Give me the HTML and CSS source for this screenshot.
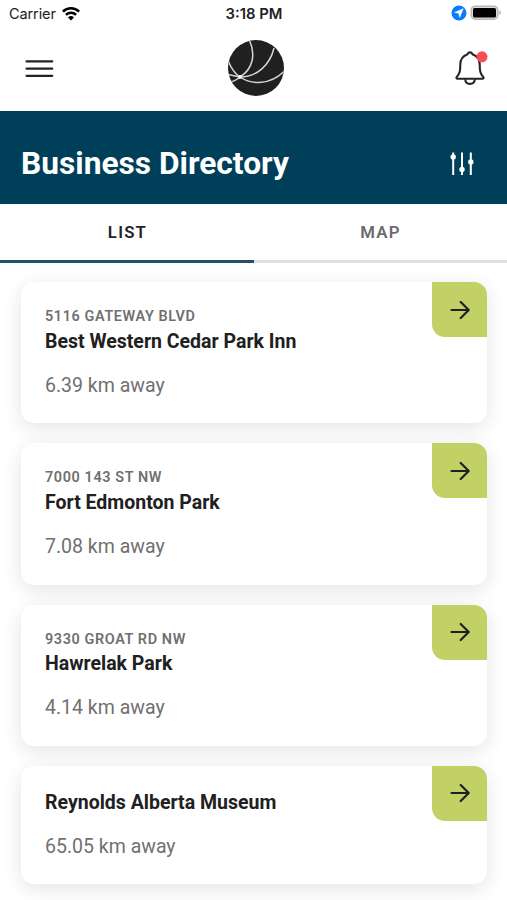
FILE: index.html
```html
<!DOCTYPE html>
<html lang="en">
<head>
<meta charset="utf-8">
<title>Business Directory</title>
<link rel="stylesheet" href="styles.css">
</head>
<body>
<div class="status">
  <div class="status-left">
    <span class="carrier">Carrier</span>
    <svg class="wifi" width="18" height="14" viewBox="0 0 18 14"><g fill="none" stroke="#000" stroke-width="2.5"><path d="M0.9 4.600a11.6 11.6 0 0 1 16.2 0"/><path d="M3.9 7.900a7.3 7.3 0 0 1 10.2 0"/></g><path d="M6 10.5a4.3 4.3 0 0 1 6 0L9 13.500z"/></svg>
  </div>
  <span class="time">3:18 PM</span>
  <div class="status-right">
    <svg width="16" height="16" viewBox="0 0 16 16"><circle cx="8" cy="8" r="7.5" fill="#087cff"/><path d="M12.2 3.8 8.7 12.3 7.8 8.2 3.7 7.4z" fill="#fff" stroke="#fff" stroke-width=".6" stroke-linejoin="round"/></svg>
    <svg width="32" height="16" viewBox="0 0 32 16"><rect x="1.200" y="1.200" width="26.600" height="13" rx="4" fill="#ddd" stroke="#b8b8b8" stroke-width="1.500"/><rect x="3" y="3" width="23" height="9.400" rx="1.500" fill="#000"/><path d="M29.300 5.300c2 .8 2 3.800 0 4.600z" fill="#aaa"/></svg>
  </div>
</div>
<header class="topbar">
  <svg class="menu" width="30" height="20" viewBox="0 0 30 20"><path d="M2.600 2.400h25.600M2.600 9.700h25.600M2.600 16.800h25.600" stroke="#252323" stroke-width="2.300" stroke-linecap="round"/></svg>
  <svg class="logo" width="56" height="56" viewBox="0 0 56 56"><defs><clipPath id="disc"><circle cx="28" cy="28" r="28"/></clipPath></defs><circle cx="28" cy="28" r="28" fill="#212021"/><g clip-path="url(#disc)" fill="none" stroke="#d4d4d4" stroke-width="1.500"><path d="M21.300 0C28 14 25 29 12 37"/><path d="M46 8C42 25 29 37 12 37"/><path d="M56 31.500C42 45 24 45 12 37"/><path d="M0 20.500C3 28 6 33 12 37"/><path d="M0 34.500C4 35.500 8 36 12 37"/><path d="M2.500 42C6 41.500 9 39.500 12 37"/></g><circle cx="12" cy="37" r="1.900" fill="#fff"/></svg>
  <svg class="bell" width="36" height="38" viewBox="0 0 36 38"><g fill="none" stroke="#252323" stroke-width="2.100" stroke-linejoin="round"><path d="M14.600 4.200c1-2.400 3.800-2.400 4.800 0C24.800 6 26.700 9.700 26.700 14.500c0 6.800 .6 9 3.500 12.400.8 1 .3 1.900-.9 1.900H4.700c-1.200 0-1.700-.9-.9-1.900 2.900-3.400 3.500-5.600 3.500-12.400 0-4.800 1.900-8.500 7.300-10.300z"/><path d="M12.200 29.200c.2 2.900 2.300 4.700 4.800 4.700s4.600-1.800 4.800-4.700"/></g><circle cx="29" cy="6.800" r="5.500" fill="#fb4b54"/></svg>
</header>
<div class="hero">
  <h1>Business Directory</h1>
  <svg width="24" height="26" viewBox="0 0 24 26"><path d="M3.200 1.500v22.500M12 1.500v22.500M20.800 1.500v22.500" stroke="#fff" stroke-width="2"/><g fill="#fff"><circle cx="3.200" cy="6" r="2.700"/><circle cx="12" cy="18.500" r="2.700"/><circle cx="20.800" cy="11" r="2.700"/></g></svg>
</div>
<nav class="tabs"><a class="tab active">LIST</a><a class="tab">MAP</a></nav>
<main class="list">
  <article class="card">
    <p class="address">5116 GATEWAY BLVD</p><h2>Best Western Cedar Park Inn</h2><p class="distance">6.39 km away</p>
    <span class="go"><svg width="20" height="20" viewBox="0 0 20 20"><path d="M1.500 10h17M10.700 2l8 8-8 8"/></svg></span>
  </article>
  <article class="card">
    <p class="address">7000 143 ST NW</p><h2>Fort Edmonton Park</h2><p class="distance">7.08 km away</p>
    <span class="go"><svg width="20" height="20" viewBox="0 0 20 20"><path d="M1.500 10h17M10.700 2l8 8-8 8"/></svg></span>
  </article>
  <article class="card">
    <p class="address">9330 GROAT RD NW</p><h2>Hawrelak Park</h2><p class="distance">4.14 km away</p>
    <span class="go"><svg width="20" height="20" viewBox="0 0 20 20"><path d="M1.500 10h17M10.700 2l8 8-8 8"/></svg></span>
  </article>
  <article class="card">
    <h2>Reynolds Alberta Museum</h2><p class="distance">65.05 km away</p>
    <span class="go"><svg width="20" height="20" viewBox="0 0 20 20"><path d="M1.500 10h17M10.700 2l8 8-8 8"/></svg></span>
  </article>
</main>
</body>
</html>
```
FILE: styles.css
```css
* { box-sizing: border-box; }
body { margin: 0; height: 900px; overflow: hidden; background: #fff; font-family: Roboto, sans-serif; color: #212021; }
h1, h2, p { margin: 0; }
svg { display: block; flex: none; }
.status { height: 27px; display: grid; grid-template-columns: 1fr auto 1fr; align-items: center; padding: 0 6px 0 9px; font-family: Inter, sans-serif; font-size: 14.5px; }
.status-left { display: flex; align-items: center; gap: 6px; }
.carrier { letter-spacing: -0.1px; }
.time { margin-left: -2px; font-size: 14.8px; font-weight: 600; }
.status-right { display: flex; justify-content: flex-end; align-items: center; gap: 3px; }
.status-right svg:last-child { margin-right: -1px; }
.status-right svg { margin-top: -1px; }
.topbar { height: 84px; display: grid; grid-template-columns: 1fr 56px 1fr; align-items: center; padding: 0 18px 2px 23px; }
.menu { margin: 1px 0 0 1px; }
.logo { margin-left: -.5px; }
.bell { justify-self: end; margin-top: 1px; }
.hero { height: 93px; display: flex; align-items: center; justify-content: space-between; padding: 12px 33px 0 21px; background: #003f5a; color: #fff; }
h1 { margin-top: 1px; font-size: 31.7px; line-height: 38px; font-weight: 700; }
.tabs { height: 59px; display: flex; }
.tab { flex: 1; display: flex; align-items: center; justify-content: center; border-bottom: 3px solid #e1e1e1; font-size: 16.8px; font-weight: 600; letter-spacing: 1.2px; color: #6a6a6a; }
.tab.active { padding-left: 1px; color: #252323; border-color: #24506a; }
.list { display: flex; flex-direction: column; gap: 20px; padding: 19px 20px 0 20.5px; }
.card { position: relative; padding: 23.8px 24.5px 24.5px; border-radius: 13px; background: #fff; box-shadow: 0 5px 20px rgba(0, 0, 0, .11); }
.address { margin-top: -.8px; padding-bottom: .8px; font-size: 14.45px; line-height: 23px; font-weight: 600; letter-spacing: .6px; color: #707070; }
h2 { font-size: 19.5px; line-height: 26px; font-weight: 700; }
.distance { margin-top: 18px; font-size: 19.5px; line-height: 26px; color: #707070; }
.go { position: absolute; top: 0; right: 0; width: 55px; height: 55px; display: flex; align-items: center; justify-content: center; border-radius: 0 13px 0 13px; background: #c1d166; }
.go path { fill: none; stroke: #212021; stroke-width: 2.2; stroke-linecap: round; stroke-linejoin: round; }
```
